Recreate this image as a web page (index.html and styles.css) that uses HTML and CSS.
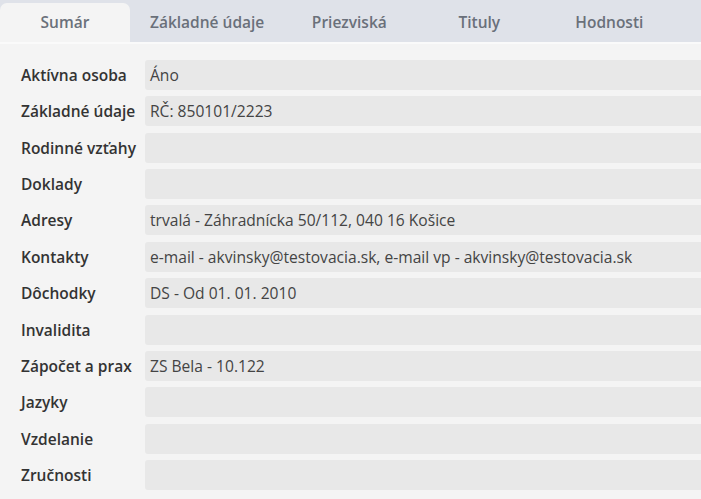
FILE: index.html
```html
<!DOCTYPE html>
<html lang="sk">
<head>
<meta charset="utf-8">
<title>Sumár</title>
<link rel="stylesheet" href="styles.css">
</head>
<body>
<div class="page">
  <nav class="tabs">
    <div class="tab active">Sumár</div>
    <div class="tab">Základné údaje</div>
    <div class="tab">Priezviská</div>
    <div class="tab">Tituly</div>
    <div class="tab">Hodnosti</div>
  </nav>
  <div class="content">
    <div class="row"><div class="label">Aktívna osoba</div><div class="value">Áno</div></div>
    <div class="row"><div class="label">Základné údaje</div><div class="value">RČ: 850101/2223</div></div>
    <div class="row"><div class="label">Rodinné vzťahy</div><div class="value"></div></div>
    <div class="row"><div class="label">Doklady</div><div class="value"></div></div>
    <div class="row"><div class="label">Adresy</div><div class="value">trvalá - Záhradnícka 50/112, 040 16 Košice</div></div>
    <div class="row"><div class="label">Kontakty</div><div class="value">e-mail - akvinsky@testovacia.sk, e-mail vp - akvinsky@testovacia.sk</div></div>
    <div class="row"><div class="label">Dôchodky</div><div class="value">DS - Od 01. 01. 2010</div></div>
    <div class="row"><div class="label">Invalidita</div><div class="value"></div></div>
    <div class="row"><div class="label">Zápočet a prax</div><div class="value">ZS Bela - 10.122</div></div>
    <div class="row"><div class="label">Jazyky</div><div class="value"></div></div>
    <div class="row"><div class="label">Vzdelanie</div><div class="value"></div></div>
    <div class="row"><div class="label">Zručnosti</div><div class="value"></div></div>
  </div>
</div>
</body>
</html>
```
FILE: styles.css
```css
html, body {
  margin: 0;
  padding: 0;
  background: #f4f4f4;
  font-family: "Open Sans", "Liberation Sans", sans-serif;
}
.page {
  width: 701px;
  height: 499px;
  overflow: hidden;
}
.tabs {
  display: flex;
  align-items: flex-end;
  height: 42px;
  background: #dfe2e9;
  box-sizing: border-box;
}
.tab {
  min-width: 130px;
  box-sizing: border-box;
  padding: 0 20px 1px;
  height: 39px;
  display: flex;
  align-items: center;
  justify-content: center;
  font-size: 15.5px;
  font-weight: 600;
  color: #6a707a;
  white-space: nowrap;
}
.tab.active {
  background: #f4f4f4;
  border-radius: 7px 7px 0 0;
}
.content {
  border-top: 2px solid #fafafa;
  padding: 16px 0 0 21px;
  display: flex;
  flex-direction: column;
  gap: 6.36px;
}
.row {
  display: grid;
  grid-template-columns: 124px 1fr;
  align-items: center;
  height: 30px;
}
.label {
  font-size: 15.5px;
  font-weight: 600;
  color: #333;
  white-space: nowrap;
}
.value {
  height: 30px;
  box-sizing: border-box;
  background: #e8e8e8;
  border-radius: 3px 0 0 3px;
  padding: 0 5px;
  font-size: 15.6px;
  color: #444;
  line-height: 30px;
  white-space: nowrap;
  overflow: hidden;
}
```
